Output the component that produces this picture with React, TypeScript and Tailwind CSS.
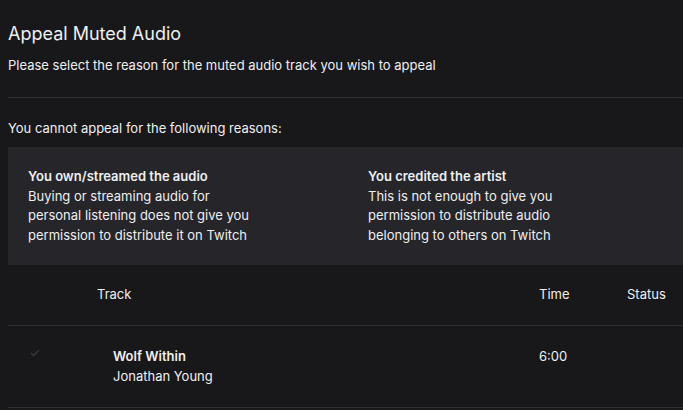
import React from 'react';

const reasons = [
  {
    title: 'You own/streamed the audio',
    lines: ['Buying or streaming audio for', 'personal listening does not give you', 'permission to distribute it on Twitch'],
  },
  {
    title: 'You credited the artist',
    lines: ['This is not enough to give you', 'permission to distribute audio', 'belonging to others on Twitch'],
  },
];

const App: React.FC = () => {
  return (
    <div
      className="w-[683px] h-[410px] overflow-hidden bg-[#18181b] text-[#efeff1]"
      style={{ fontFamily: 'Inter, "Noto Sans", sans-serif' }}
    >
      <div className="pl-2 pt-[22px]">
        <h1 className="text-[18px] leading-[24px] font-normal">Appeal Muted Audio</h1>
        <p className="mt-[10px] text-[13px] leading-[18px]">Please select the reason for the muted audio track you wish to appeal</p>
        <div className="mt-[23px] h-px bg-[#2f2f35]" />
        <p className="mt-[21px] text-[13px] leading-[18px]">You cannot appeal for the following reasons:</p>

        {/* Reasons panel */}
        <div className="mt-[10px] h-[118px] bg-[#25252a] flex pt-[20px] pl-5">
          {reasons.map(r => (
            <div key={r.title} className="w-[340px] shrink-0 text-[13px] leading-[19.5px]">
              <div className="font-semibold">{r.title}</div>
              {r.lines.map(l => (
                <div key={l}>{l}</div>
              ))}
            </div>
          ))}
        </div>

        {/* Table header */}
        <div className="flex items-center h-[60px] text-[13px]">
          <div className="w-[89px]" />
          <div className="flex-1">Track</div>
          <div className="w-[88px]">Time</div>
          <div className="w-[56px]">Status</div>
        </div>
        <div className="h-px bg-[#2f2f35]" />

        {/* Row */}
        <div className="flex items-start h-[81px] pt-[20px] text-[13px] leading-[20px]">
          <div className="w-[105px] pl-[22px] pt-[3px]">
            <svg width="10" height="8" viewBox="0 0 10 8" fill="none">
              <path d="M1 4l2.5 2.5L9 1" stroke="#3a3a3f" strokeWidth="1.3" />
            </svg>
          </div>
          <div className="flex-1">
            <div className="font-semibold">Wolf Within</div>
            <div>Jonathan Young</div>
          </div>
          <div className="w-[144px]">6:00</div>
        </div>
        <div className="h-px bg-[#2f2f35]" />
      </div>
    </div>
  );
};

export default App;
